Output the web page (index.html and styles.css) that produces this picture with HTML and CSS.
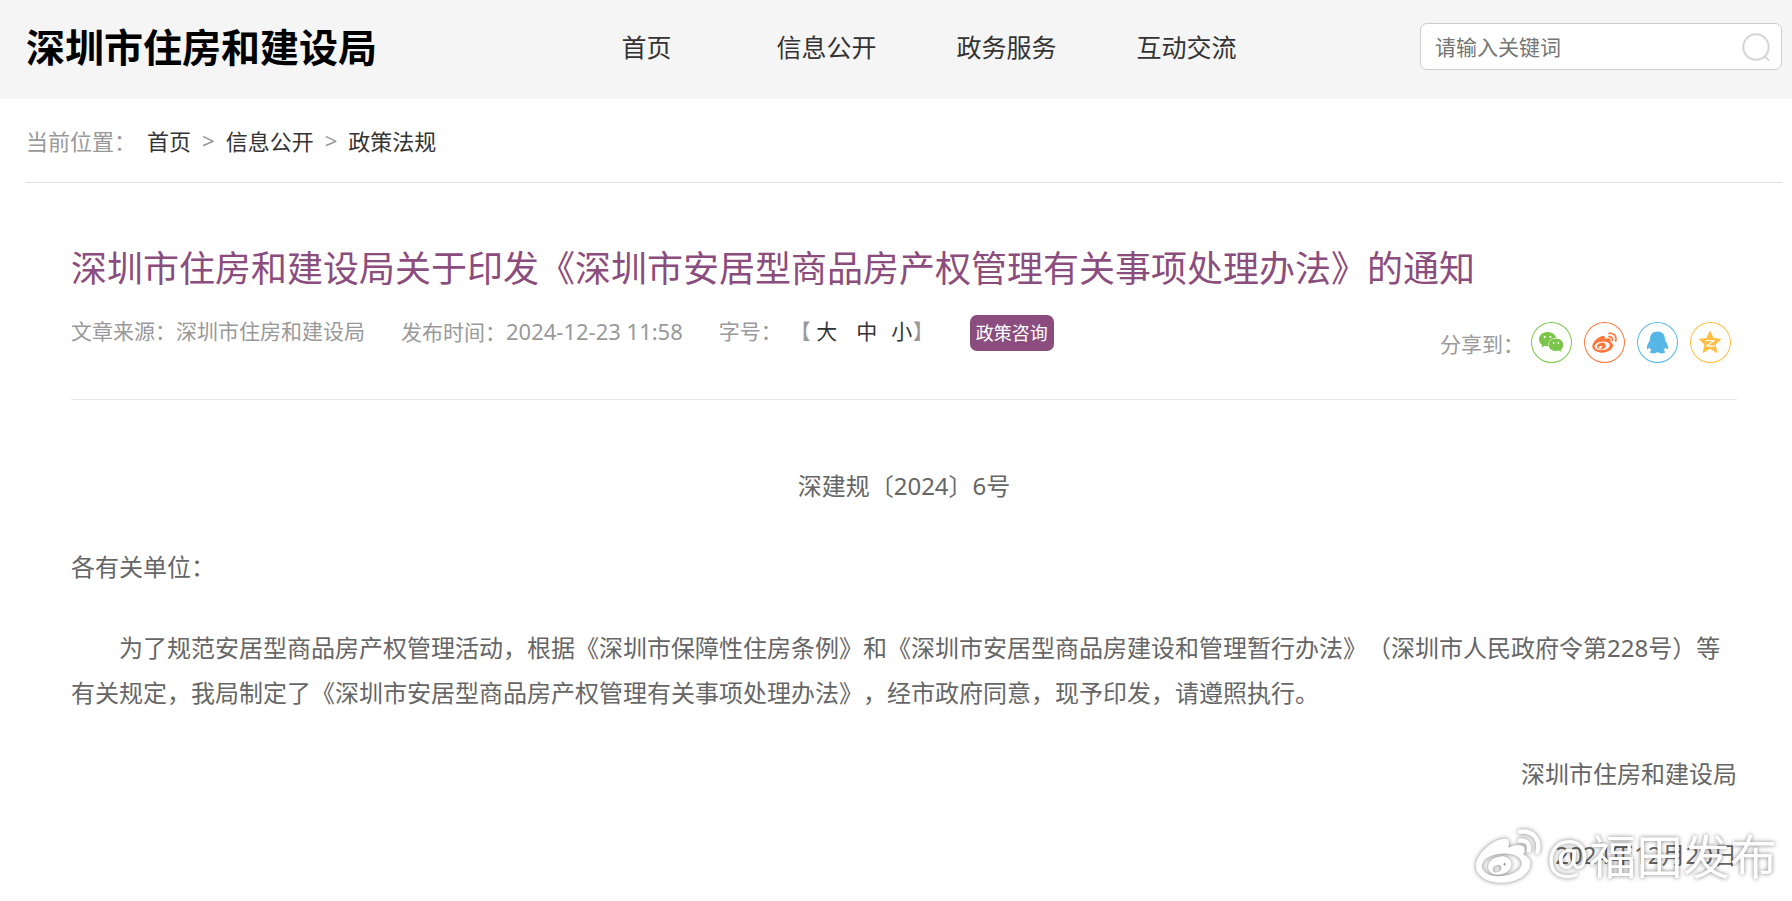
FILE: index.html
```
<!DOCTYPE html>
<html lang="zh-CN">
<head>
  <meta charset="UTF-8">
  <title>深圳市住房和建设局</title>
  <link rel="stylesheet" href="styles.css">
</head>
<body>
  <header class="header">
    <div class="site-name">深圳市住房和建设局</div>
    <nav class="nav">
      <a href="#">首页</a>
      <a href="#">信息公开</a>
      <a href="#">政务服务</a>
      <a href="#">互动交流</a>
    </nav>
    <form class="search">
      <input type="text" id="keyword" placeholder="请输入关键词" aria-label="请输入关键词">
      <button type="button" aria-label="搜索">
        <svg viewBox="0 0 28 28" width="28" height="28" fill="none" stroke="#d5d5d5" stroke-width="2">
          <circle cx="14" cy="14" r="12.7"/>
          <path d="M22.5 23l4.500 4.500"/>
        </svg>
      </button>
    </form>
  </header>

  <div class="breadcrumb">
    <span class="label">当前位置：</span>
    <a href="#">首页</a>
    <span>&gt;</span>
    <a href="#">信息公开</a>
    <span>&gt;</span>
    <a href="#">政策法规</a>
  </div>

  <main class="article">
    <h1>深圳市住房和建设局关于印发《深圳市安居型商品房产权管理有关事项处理办法》的通知</h1>

    <div class="info">
      <div class="meta">
        <span>文章来源：深圳市住房和建设局</span>
        <span>发布时间：<time>2024-12-23 11:58</time></span>
        <div class="font-size">
          <span class="label">字号：</span>
          <span>【</span>
          <button type="button">大</button>
          <button type="button">中</button>
          <button type="button">小</button>
          <span>】</span>
        </div>
        <a class="consult" href="#">政策咨询</a>
      </div>
      <div class="share">
        <span>分享到：</span>
        <div class="share-links">
          <a class="wechat" href="#" aria-label="微信">
            <svg viewBox="0 0 41 41" width="41" height="41">
              <path fill="currentColor" d="M16.500 10c-4.900 0-8.500 3.200-8.500 7.200 0 2.300 1.200 4.200 3.100 5.600l-.6 2.700 3.200-1.700c1.200.4 2.200.5 3.500.4-.8-4.800 3.200-8.400 8-8.400-.8-3.500-4.400-5.800-8.700-5.800z"/>
              <path fill="currentColor" d="M25 16.400c-4.400 0-7.500 2.800-7.500 6.300s3.200 6.300 7.500 6.300c1 0 1.900-.1 2.700-.4l2.700 1.500-.6-2.500c1.500-1.200 2.500-2.900 2.500-4.900 0-3.500-3.200-6.300-7.300-6.300z"/>
              <g fill="#fff"><circle cx="13.700" cy="15" r="1.100"/><circle cx="19.400" cy="15" r="1.100"/><circle cx="22.700" cy="21" r=".9"/><circle cx="27.300" cy="21" r=".9"/></g>
            </svg>
          </a>
          <a class="weibo" href="#" aria-label="微博">
            <svg viewBox="0 0 41 41" width="41" height="41">
              <use href="#weibo-mark" x="8" y="10" width="25" height="21"/>
            </svg>
          </a>
          <a class="qq" href="#" aria-label="QQ">
            <svg viewBox="0 0 41 41" width="41" height="41">
              <path fill="currentColor" d="M20.500 9.500c-4.800 0-7.400 3.200-7.400 7.400 0 1-.7 1.500-.8 2.500-1.700 2.500-2.600 4.800-2.300 7 .2 1.300 1.400.8 2.600-1.200.4 1.400 1 2.400 2 3.200-1.200.5-2 1.100-1.700 1.900.6 1.600 5.900 1.500 7.600-.2 1.700 1.700 7 1.800 7.600.2.300-.8-.5-1.400-1.700-1.900 1-.8 1.600-1.800 2-3.200 1.200 2 2.400 2.500 2.600 1.200.3-2.200-.7-4.500-2.300-7-.1-1-.8-1.500-.8-2.500 0-4.200-2.600-7.400-7.400-7.400z"/>
            </svg>
          </a>
          <a class="qzone" href="#" aria-label="QQ空间">
            <svg viewBox="0 0 41 41" width="41" height="41">
              <path fill="currentColor" stroke="currentColor" stroke-linejoin="round" d="M20 9.500l3.300 7 7.400.8-5.600 5.100 1.700 8.100-6.800-4.200-6.800 4.200 1.700-8.100-5.600-5.100 7.400-.8z"/>
              <path fill="none" stroke="#fff" stroke-width="1.200" d="M15.500 18.800c3-.4 5.500-.4 8.500 0l-7.200 5c3 .5 5.500.5 8.200.1"/>
            </svg>
          </a>
        </div>
      </div>
    </div>

    <div class="content">
      <p class="doc-no">深建规〔2024〕6号</p>
      <p>各有关单位：</p>
      <p class="indent">为了规范安居型商品房产权管理活动，根据《深圳市保障性住房条例》和《深圳市安居型商品房建设和管理暂行办法》（深圳市人民政府令第228号）等有关规定，我局制定了《深圳市安居型商品房产权管理有关事项处理办法》，经市政府同意，现予印发，请遵照执行。</p>
      <p class="sign">深圳市住房和建设局</p>
      <p class="sign">2024年12月20日</p>
    </div>
  </main>

  <div class="watermark">
    <svg viewBox="0 0 75 63" width="66" height="56">
      <use href="#weibo-mark" width="75" height="63"/>
    </svg>
    <span>@福田发布</span>
  </div>

  <!-- shared weibo symbol -->
  <svg class="symbols" width="0" height="0">
    <symbol id="weibo-mark" viewBox="0 0 75 63">
      <path fill="currentColor" fill-rule="evenodd" d="M33 12c5-1 7 3 5 10 8-4 16-4 18 0 1 3 0 5-1 8 5 2 8 5 8 10 0 12-15 22-33 22C13 62 1 54 1 43c0-13 18-30 32-31zM29 29c-13 1-22 8-21 15s11 12 24 10c13-1 22-8 21-15s-11-12-24-10z"/>
      <path fill="currentColor" fill-rule="evenodd" d="M29 32c-9 1-15 7-14 13s8 9 16 7c7-2 12-8 10-14-2-4-7-7-12-6zM25 42c3-1 5 0 5 3s-2 4-5 5-5-1-5-3 2-4 5-5zM33 40c1-1 2 0 2 1s-1 2-2 1-1-1 0-2z"/>
      <path fill="none" stroke="currentColor" stroke-width="5" stroke-linecap="round" d="M51 4c14-2 24 8 20 23M51 14c7-1 12 4 10 11"/>
    </symbol>
  </svg>
</body>
</html>
```
FILE: styles.css
```
* {
  box-sizing: border-box;
}

body {
  margin: 0;
  font-family: "Noto Sans", "Noto Sans CJK SC", sans-serif;
  font-size: 21px;
  color: #999;
  background-color: #fff;
  text-spacing-trim: space-all;
}

a {
  color: #333;
  text-decoration: none;
}

/* Top bar */
.header {
  display: grid;
  grid-template-columns: 21fr 720px 20fr;
  align-items: center;
  height: 99px;
  padding: 0 10px 6px 26px;
  background-color: #f5f5f5;
}

.site-name {
  font-size: 39px;
  font-weight: bold;
  line-height: 48px;
  color: #000;
}

.nav {
  display: flex;
  padding-bottom: 2px;
}

.nav a {
  width: 180px;
  font-size: 25px;
  text-align: center;
}

.search {
  display: flex;
  align-items: center;
  justify-self: end;
  width: 362px;
  height: 47px;
  padding: 0 11px 0 14px;
  background-color: #fff;
  border: 1px solid #ccc;
  border-radius: 7px;
}

.search input {
  flex: 1;
  min-width: 0;
  padding: 0;
  font: inherit;
  border: none;
  outline: none;
}

.search input::placeholder {
  color: #757575;
}

.search button {
  display: flex;
  padding: 0;
  background: none;
  border: none;
  cursor: pointer;
}

/* Current position */
.breadcrumb {
  display: flex;
  align-items: center;
  gap: 11px;
  height: 84px;
  margin: 0 10px 0 26px;
  padding-bottom: 2px;
  font-size: 22px;
  border-bottom: 1px solid #e0e0e0;
}

/* Article */
.article {
  padding: 60px 55px 0 71px;
}

.article h1 {
  margin: 0;
  font-size: 36px;
  font-weight: normal;
  line-height: 52px;
  color: #8b4c7e;
}

.info {
  display: flex;
  justify-content: space-between;
  height: 105px;
  border-bottom: 1px solid #e8e8e8;
}

.meta {
  display: flex;
  gap: 36px;
  height: 36px;
  margin-top: 20px;
  line-height: 32px;
}

.meta time {
  font-size: 22px;
}

.font-size {
  display: flex;
  align-items: flex-start;
}

.font-size .label {
  margin-right: 8px;
}

.font-size button {
  width: 32px;
  padding: 0;
  font: inherit;
  line-height: 32px;
  color: #333;
  background: none;
  border: none;
  cursor: pointer;
}

.font-size button:nth-of-type(2) {
  width: 48px;
}

.font-size button:last-of-type {
  width: 22px;
}

.meta .consult {
  padding: 0 6px;
  font-size: 18px;
  line-height: 36px;
  color: #fff;
  background-color: #8b4c7e;
  border-radius: 7px;
}

.share {
  display: flex;
  align-items: center;
  gap: 7px;
  height: 41px;
  margin: 27px 6px 0 0;
}

.share-links {
  display: flex;
  gap: 12px;
}

.share-links a {
  display: flex;
  width: 41px;
  height: 41px;
  border-radius: 50%;
  box-shadow: inset 0 0 0 1px currentColor;
}

.share .wechat {
  color: #7bc549;
}

.share .weibo {
  color: #ff763b;
}

.share .qq {
  color: #56b6e7;
}

.share .qzone {
  color: #ffbe3f;
}

.content {
  padding-top: 63px;
  font-size: 24px;
  line-height: 45px;
  color: #666;
}

.content p {
  margin: 0 0 36px;
}

.content .doc-no {
  text-align: center;
}

.content .indent {
  text-indent: 2em;
}

.content .sign {
  text-align: right;
}

.content .sign:last-child {
  margin-bottom: 0;
}

/* Account mark over the page corner */
.watermark {
  position: absolute;
  right: 15px;
  bottom: 15px;
  display: flex;
  align-items: center;
  gap: 6px;
  font-size: 47px;
  line-height: 60px;
  color: #fff;
  filter: drop-shadow(0 0 2px rgba(0, 0, 0, 0.5));
}

.symbols {
  position: absolute;
}
```
